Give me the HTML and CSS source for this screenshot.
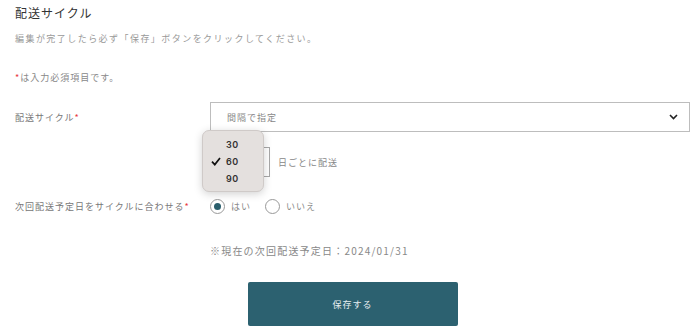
FILE: index.html
```html
<!DOCTYPE html>
<html lang="ja">
<head>
<meta charset="utf-8">
<link rel="stylesheet" href="styles.css">
</head>
<body>
<div class="page">
  <h1 class="title">配送サイクル</h1>
  <p class="lead">編集が完了したら必ず「保存」ボタンをクリックしてください。</p>
  <p class="req-note"><span class="req">*</span>は入力必須項目です。</p>

  <div class="row row-select">
    <div class="label">配送サイクル<span class="req">*</span></div>
    <div class="field">
      <div class="select">
        <span>間隔で指定</span>
        <svg class="chev" width="9" height="6" viewBox="0 0 9 6"><path d="M1 1 L4.5 4.5 L8 1" fill="none" stroke="#222" stroke-width="1.6"/></svg>
      </div>
    </div>
  </div>

  <div class="row row-days">
    <div class="label"></div>
    <div class="field days">
      <div class="num-box"></div>
      <span class="days-text">日ごとに配送</span>
      <div class="popup">
        <div class="opt">30</div>
        <div class="opt checked"><svg class="check" width="10" height="9" viewBox="0 0 10 9"><path d="M1 4.6 L3.8 7.6 L9 1" fill="none" stroke="#111" stroke-width="1.7"/></svg>60</div>
        <div class="opt">90</div>
      </div>
    </div>
  </div>

  <div class="row row-radio">
    <div class="label">次回配送予定日をサイクルに合わせる<span class="req">*</span></div>
    <div class="field radios">
      <label class="radio"><span class="circle on"></span>はい</label>
      <label class="radio"><span class="circle"></span>いいえ</label>
    </div>
  </div>

  <p class="next-date">※現在の次回配送予定日：2024/01/31</p>

  <div class="actions">
    <button class="save">保存する</button>
  </div>
</div>
</body>
</html>
```

FILE: styles.css
```css
* { box-sizing: border-box; }
html, body { margin: 0; padding: 0; background: #fff; }
body {
  font-family: "Noto Sans CJK JP", "Noto Sans", sans-serif;
  color: #777;
  width: 700px;
  height: 336px;
  overflow: hidden;
}
.page {
  width: 700px;
  padding: 5px 10px 0 15px;
}
.title {
  margin: 0;
  font-size: 12px;
  font-weight: 400;
  letter-spacing: 1px;
  line-height: 16px;
  color: #333;
}
.lead {
  margin: 12px 0 0;
  font-size: 9px;
  line-height: 12px;
  letter-spacing: 1.45px;
  color: #999;
}
.req-note {
  margin: 27px 0 0;
  font-size: 9px;
  line-height: 12px;
  letter-spacing: 1px;
  color: #888;
}
.req { color: #e8383d; }
.row {
  display: flex;
  align-items: center;
}
.label {
  width: 195px;
  flex: none;
  font-size: 9px;
  letter-spacing: 1px;
  color: #777;
}
.field {
  flex: 1;
  display: flex;
  align-items: center;
  font-size: 9px;
  letter-spacing: 1px;
}
.row-select { margin-top: 18px; }
.select {
  width: 480px;
  height: 30px;
  border: 1px solid #bdbdbd;
  display: flex;
  align-items: center;
  justify-content: space-between;
  padding: 0 11px 0 16px;
  color: #888;
}
.chev { display: block; }
.row-days { margin-top: 15px; }
.days { position: relative; }
.num-box {
  width: 60px;
  height: 30px;
  border: 1px solid #a8a8a8;
}
.days-text { margin-left: 8px; color: #888; }
.popup {
  position: absolute;
  left: -8px;
  top: -17px;
  width: 62px;
  height: 62px;
  background: #e4e0de;
  border: 1px solid #cfcac8;
  border-radius: 7px;
  box-shadow: 0 2px 8px rgba(0,0,0,0.18);
  padding-top: 5px;
}
.opt {
  position: relative;
  height: 17px;
  line-height: 17px;
  padding-left: 23px;
  font-size: 9px;
  font-weight: 600;
  letter-spacing: 0.5px;
  color: #333;
  font-family: "Inter", "Noto Sans", sans-serif;
}
.check {
  position: absolute;
  left: 8px;
  top: 4px;
}
.row-radio { margin-top: 21px; height: 16px; }
.radios { gap: 0; }
.radio {
  display: flex;
  align-items: center;
  color: #888;
  margin-right: 14px;
}
.circle {
  width: 15px;
  height: 15px;
  border: 1px solid #999;
  border-radius: 50%;
  margin-right: 6px;
  display: flex;
  align-items: center;
  justify-content: center;
  background: #fff;
}
.circle.on::after {
  content: "";
  width: 7px;
  height: 7px;
  border-radius: 50%;
  background: #2a5e6c;
}
.next-date {
  margin: 31px 0 0 195px;
  font-size: 10px;
  line-height: 12px;
  letter-spacing: 1.2px;
  color: #888;
}
.actions {
  display: flex;
  justify-content: center;
  margin-top: 25px;
}
.save {
  width: 210px;
  height: 44px;
  border: none;
  border-radius: 2px;
  background: #2c6170;
  color: #e6eef0;
  font-family: "Noto Sans CJK JP", sans-serif;
  font-size: 9px;
  letter-spacing: 1px;
}
```
